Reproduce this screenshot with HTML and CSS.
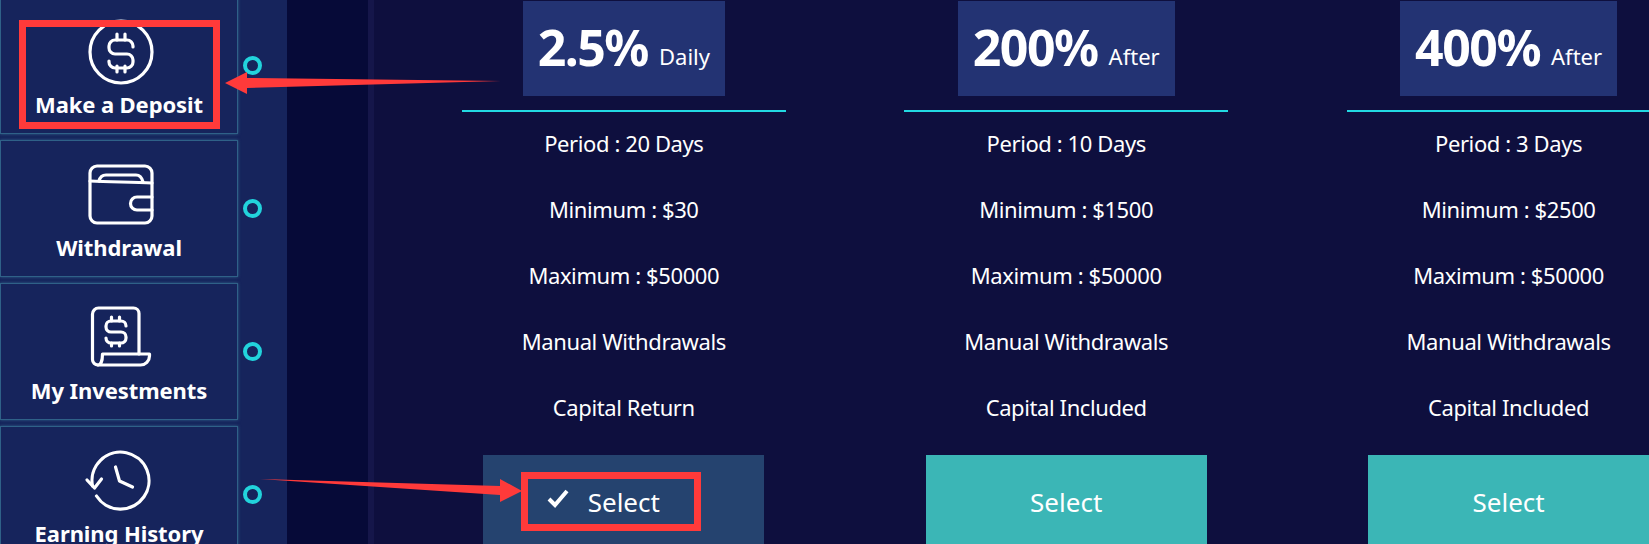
FILE: index.html
```html
<!DOCTYPE html>
<html lang="en">
<head>
    <meta charset="UTF-8">
    <title>Investment Plans</title>
    <link rel="stylesheet" href="styles.css">
</head>
<body>
    <div class="page">
        <div class="sidebar">
            <div class="nav-row">
                <a class="nav-card">
                    <svg class="nav-icon" width="70" height="70" viewBox="0 0 70 70">
                        <circle cx="35" cy="35" r="31"/>
                        <path d="M47 30v-1a6 6 0 0 0-6-6H29a6 6 0 0 0-6 6v2a6 6 0 0 0 6 6h12a6 6 0 0 1 6 6v2a6 6 0 0 1-6 6H29a6 6 0 0 1-6-6v-1"/>
                        <path d="M31 17v6M39 17v6M31 49v6M39 49v6"/>
                    </svg>
                    <span>Make a Deposit</span>
                </a>
                <span class="dot"></span>
            </div>
            <div class="nav-row">
                <a class="nav-card">
                    <svg class="nav-icon" width="70" height="70" viewBox="0 0 70 70">
                        <rect x="4" y="6" width="62" height="57" rx="7"/>
                        <path d="M4 21c20 1 42 1 62 2"/>
                        <path d="M13 21c1-4 3-6 7-6h30c4 0 6 3 7 7"/>
                        <path d="M66 37H51a6.5 6.5 0 0 0 0 13h15"/>
                    </svg>
                    <span>Withdrawal</span>
                </a>
                <span class="dot"></span>
            </div>
            <div class="nav-row">
                <a class="nav-card">
                    <svg class="nav-icon" width="70" height="70" viewBox="0 0 70 70">
                        <path d="M12 62a5.5 5.5 0 0 1-5.5-5.5V11a6 6 0 0 1 6-6h35a5.5 5.5 0 0 1 5.5 5.5V51"/>
                        <path d="M16.5 51H63.5v2a9 9 0 0 1-9 9H12c3 0 4.5-5 4.5-11z"/>
                        <path d="M40 23a5 5 0 0 0-5-5H25a5 5 0 0 0-5 5v1a5 5 0 0 0 5 5h10a5 5 0 0 1 5 5v1a5 5 0 0 1-5 5H25a5 5 0 0 1-5-5"/>
                        <path d="M25.5 14v4M33.5 14v4M25.5 40v3M33.5 40v3"/>
                    </svg>
                    <span>My Investments</span>
                </a>
                <span class="dot"></span>
            </div>
            <div class="nav-row">
                <a class="nav-card">
                    <svg class="nav-icon" width="70" height="70" viewBox="0 0 70 70">
                        <path d="M6.5 40A28.5 28.5 0 1 1 10.5 50"/>
                        <path d="M1 34l7.5 8 7-9"/>
                        <path d="M29.5 21l4 14 13 6"/>
                    </svg>
                    <span>Earning History</span>
                </a>
                <span class="dot"></span>
            </div>
        </div>

        <div class="gutter"></div>

        <div class="plans">
            <div class="plan">
                <div class="rate"><strong>2.5%</strong><small>Daily</small></div>
                <ul class="terms">
                    <li>Period : 20 Days</li>
                    <li>Minimum : $30</li>
                    <li>Maximum : $50000</li>
                    <li>Manual Withdrawals</li>
                    <li>Capital Return</li>
                </ul>
                <button class="select-btn active">
                    <svg class="check" width="22" height="20" viewBox="0 0 22 20"><path d="M2 11l6 6L20 3"/></svg>
                    Select
                </button>
            </div>
            <div class="plan">
                <div class="rate"><strong>200%</strong><small>After</small></div>
                <ul class="terms">
                    <li>Period : 10 Days</li>
                    <li>Minimum : $1500</li>
                    <li>Maximum : $50000</li>
                    <li>Manual Withdrawals</li>
                    <li>Capital Included</li>
                </ul>
                <button class="select-btn">Select</button>
            </div>
            <div class="plan">
                <div class="rate"><strong>400%</strong><small>After</small></div>
                <ul class="terms">
                    <li>Period : 3 Days</li>
                    <li>Minimum : $2500</li>
                    <li>Maximum : $50000</li>
                    <li>Manual Withdrawals</li>
                    <li>Capital Included</li>
                </ul>
                <button class="select-btn">Select</button>
            </div>
        </div>
    </div>

    <!-- red markup drawn on top of the screenshot -->
    <div class="mark mark-deposit"></div>
    <div class="mark mark-select"></div>
    <svg class="arrows" width="1649" height="544" viewBox="0 0 1649 544">
        <polygon points="501,81 247,78 247,72 225,83 247,94 247,88"/>
        <polygon points="260,479 500,486 500,479 522,491 500,502 500,495"/>
    </svg>
</body>
</html>
```

FILE: styles.css
```css
* {
    margin: 0;
    padding: 0;
    box-sizing: border-box;
}

body {
    font-family: 'Noto Sans', sans-serif;
    background-color: #0e0f3e;
    color: white;
    height: 544px;
    overflow: hidden;
    position: relative;
}

.page {
    display: flex;
    height: 544px;
    overflow: hidden;
}

/* left menu */
.sidebar {
    width: 287px;
    flex-shrink: 0;
    background-color: #16245c;
    display: flex;
    flex-direction: column;
    gap: 6px;
    margin-top: -3px;
    height: 600px;
}

.nav-row {
    display: flex;
    align-items: center;
    gap: 5px;
}

.nav-card {
    width: 238px;
    height: 137px;
    background-color: #16245c;
    border: 1px solid #2f6188;
    box-shadow: 0 0 3px #2f6188;
    display: flex;
    flex-direction: column;
    align-items: center;
    padding-top: 19px;
    padding-left: 3px;
}

.nav-card span {
    font-size: 22px;
    font-weight: 700;
    line-height: 28px;
    margin-top: 3px;
    margin-left: -3px;
    letter-spacing: -0.1px;
}

.nav-icon {
    fill: none;
    stroke: white;
    stroke-width: 3.2;
    stroke-linecap: round;
    stroke-linejoin: round;
    overflow: visible;
}

.dot {
    width: 19px;
    height: 19px;
    border: 4px solid #22d3dc;
    border-radius: 50%;
}

.gutter {
    width: 87px;
    flex-shrink: 0;
    background-color: #060a38;
    border-right: 6px solid #15164a;
}

/* plan columns */
.plans {
    display: grid;
    grid-template-columns: repeat(3, 324px);
    column-gap: 118.4px;
    padding-left: 87.8px;
}

.plan {
    display: flex;
    flex-direction: column;
    align-items: center;
    padding-top: 1px;
}

.rate {
    height: 95px;
    background-color: #233373;
    padding: 12px 15px 0;
    display: flex;
    align-items: flex-start;
    gap: 11px;
}

.rate strong {
    font-size: 50px;
    font-weight: 700;
    line-height: 68px;
    letter-spacing: -1.5px;
}

.rate small {
    font-size: 22px;
    line-height: 30px;
    margin-top: 28px;
}

.terms {
    list-style: none;
    width: 100%;
    margin-top: 14px;
    border-top: 2px solid #22d9e3;
}

.terms li {
    height: 66px;
    line-height: 62px;
    text-align: center;
    font-size: 22px;
    letter-spacing: -0.4px;
}

.select-btn {
    position: relative;
    width: 281px;
    height: 94px;
    margin-top: 13px;
    background: #3bb6b6;
    color: white;
    border: none;
    font-family: inherit;
    font-size: 26px;
}

.select-btn.active {
    background: #25436f;
}

.check {
    position: absolute;
    left: 64px;
    top: 33px;
    fill: none;
    stroke: white;
    stroke-width: 4;
}

/* annotations */
.mark {
    position: absolute;
    border: 7px solid #ff3a3a;
}

.mark-deposit {
    left: 19px;
    top: 20px;
    width: 201px;
    height: 109px;
}

.mark-select {
    left: 521px;
    top: 472px;
    width: 180px;
    height: 59px;
}

.arrows {
    position: absolute;
    left: 0;
    top: 0;
}

.arrows polygon {
    fill: #ff3a3a;
}
```
